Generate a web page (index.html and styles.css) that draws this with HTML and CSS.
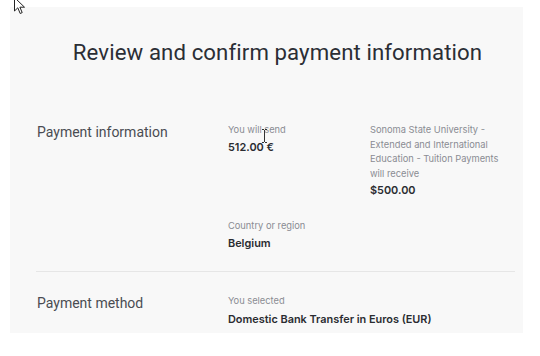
FILE: index.html
```html
<!DOCTYPE html>
<html>
<head>
<meta charset="utf-8">
<link rel="stylesheet" href="styles.css">
</head>
<body>
<div class="panel">
  <h1 class="title">Review and confirm payment information</h1>
  <section class="row row-info">
    <h2 class="label">Payment information</h2>
    <div class="field">
      <div class="small">You will send</div>
      <div class="value">512.00 €</div>
    </div>
    <div class="field">
      <div class="small">Sonoma State University - Extended and International Education - Tuition Payments will receive</div>
      <div class="value">$500.00</div>
    </div>
    <div class="field country">
      <div class="small">Country or region</div>
      <div class="value">Belgium</div>
    </div>
  </section>
  <hr class="divider">
  <section class="row row-method">
    <h2 class="label">Payment method</h2>
    <div class="field wide">
      <div class="small">You selected</div>
      <div class="value">Domestic Bank Transfer in Euros (EUR)</div>
    </div>
  </section>
</div>
<svg class="cursor-arrow" width="12" height="18" viewBox="0 0 12 18"><path d="M0.5 0.5 L0.5 14 L3.8 10.8 L6.2 16.5 L8.2 15.6 L5.9 10.2 L10.5 10.2 Z" fill="#fff" stroke="#222" stroke-width="1"/></svg>
<svg class="cursor-ibeam" width="7" height="14" viewBox="0 0 7 14"><path d="M1 0.5 H3 M4 0.5 H6 M3.5 1 V13 M1 13.5 H3 M4 13.5 H6" stroke="#333" stroke-width="1" fill="none"/></svg>
</body>
</html>
```
FILE: styles.css
```css
* { box-sizing: border-box; }
html, body { margin: 0; padding: 0; background: #ffffff; }
body {
  width: 540px;
  height: 356px;
  position: relative;
  overflow: hidden;
  font-family: "Inter", "Roboto", sans-serif;
}
.panel {
  margin: 7px 0 0 10px;
  width: 513px;
  height: 326px;
  background: #f8f8f8;
  padding: 31px 8px 0 26px;
}
.title {
  margin: 0 0 0 4px;
  text-align: center;
  font-family: "Roboto", sans-serif;
  font-weight: 400;
  font-size: 22.2px;
  line-height: 28px;
  color: #2b2e35;
  letter-spacing: 0.1px;
}
.row {
  display: grid;
  grid-template-columns: 192px 142px 134px;
  align-items: start;
}
.row-info { margin-top: 57px; row-gap: 21px; }
.label {
  margin: 0;
  padding-left: 1px;
  font-family: "Roboto", sans-serif;
  font-weight: 400;
  font-size: 14px;
  line-height: 18px;
  color: #4a4c52;
}
.row-info .label { grid-row: span 2; }
.small {
  font-family: "Inter", sans-serif;
  font-size: 9.3px;
  line-height: 14.5px;
  color: #8a8c93;
}
.value {
  font-family: "Inter", sans-serif;
  font-weight: 600;
  font-size: 10.9px;
  line-height: 16px;
  color: #2a2c31;
  margin-top: 1px;
}
.country { grid-column: 2 / span 2; }
.divider {
  border: 0;
  height: 1px;
  background: #e6e6e6;
  margin: 20px 0 0 0;
}
.row-method { margin-top: 22px; }
.wide { grid-column: 2 / span 2; }
.row-method .value { margin-top: 3px; }
.cursor-arrow { position: absolute; left: 14px; top: -3px; }
.cursor-ibeam { position: absolute; left: 261px; top: 129px; }
```
